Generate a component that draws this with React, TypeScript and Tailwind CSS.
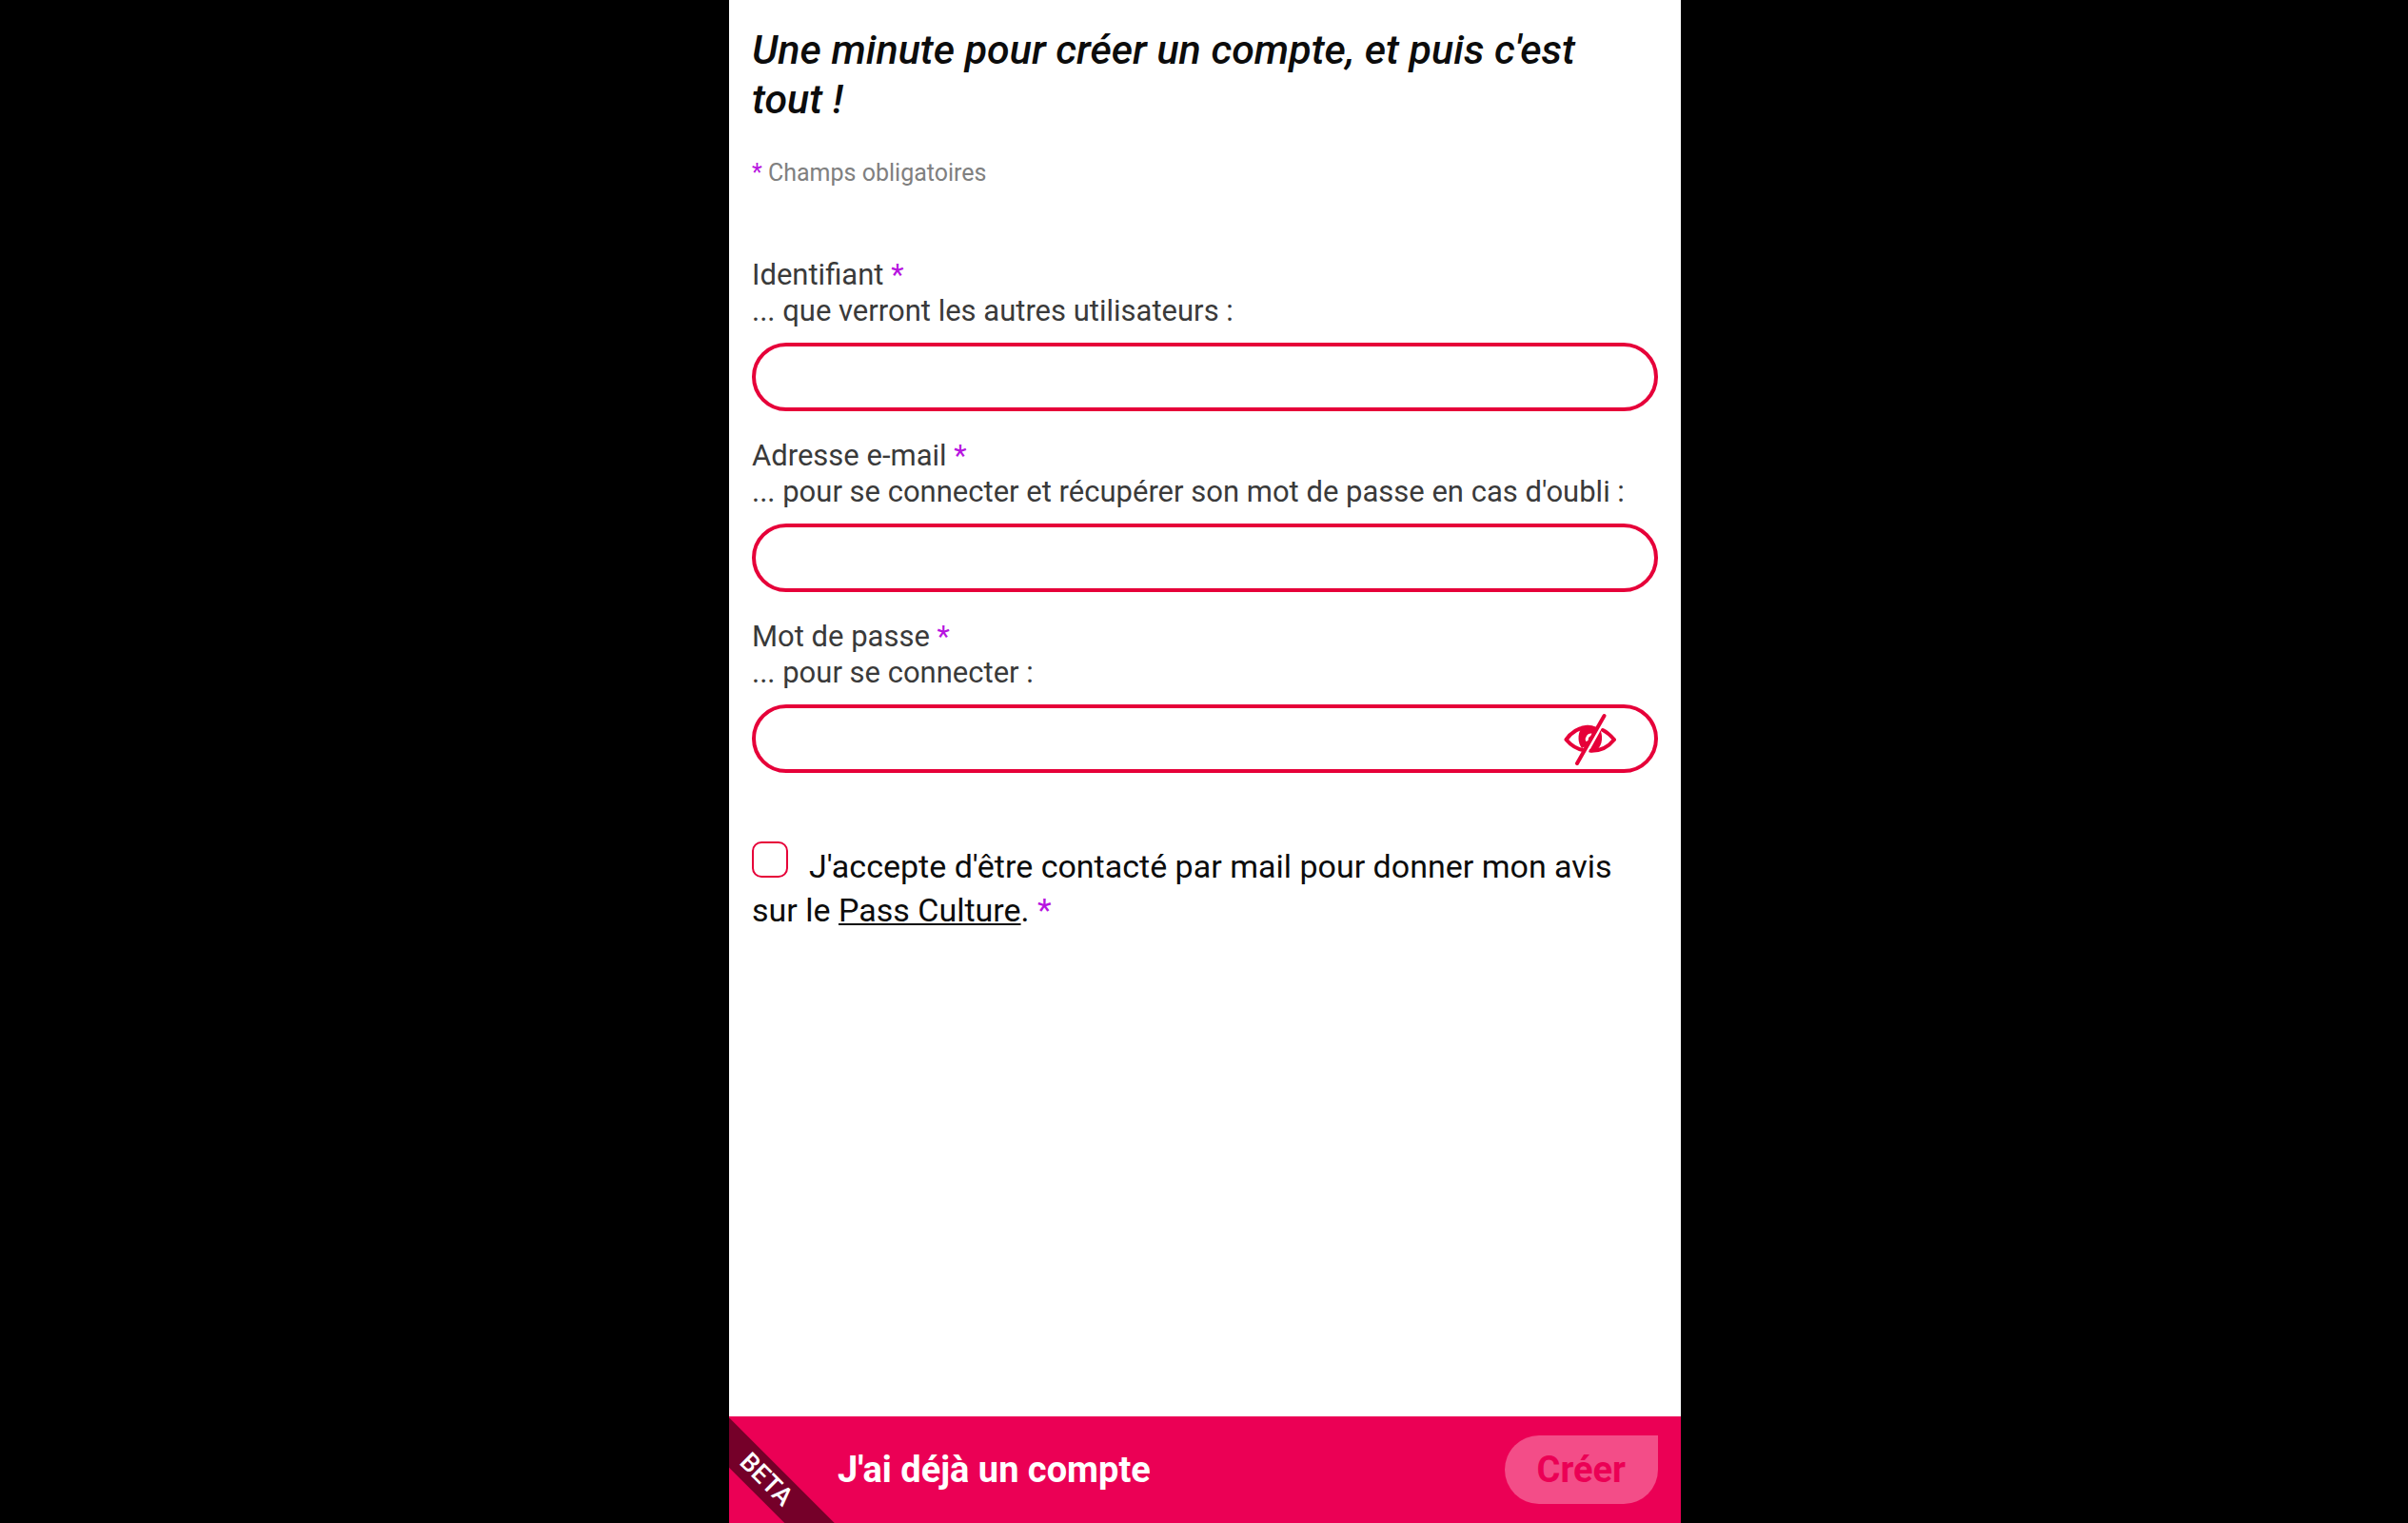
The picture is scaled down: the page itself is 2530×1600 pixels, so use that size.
import { useState, type ReactNode } from "react";

function Required() {
  return <span className="text-[#b715e0]">*</span>;
}

type FieldProps = {
  id: string;
  label: string;
  hint: string;
  type: string;
  children?: ReactNode;
};

function Field({ id, label, hint, type, children }: FieldProps) {
  return (
    <div>
      <label htmlFor={id} className="block pb-3.5 text-[31px] leading-[38px] text-[#3a3a3a]">
        {label} <Required />
        <span className="block">{hint}</span>
      </label>
      <div className="relative">
        <input
          id={id}
          type={type}
          className="block h-18 w-full rounded-full border-4 border-[#e60039] bg-white px-8 text-[31px] outline-none"
        />
        {children}
      </div>
    </div>
  );
}

function EyeSlash() {
  return (
    <svg viewBox="0 0 56 56" className="size-14" fill="none" aria-hidden="true">
      <g stroke="#e60039" strokeWidth="4" strokeLinecap="round" strokeLinejoin="round">
        <path d="M34 17.500C31 16 28 15.500 25.500 15.700C16 16.500 8 22.500 3.500 29C9 35.500 15 39 22 40.200" />
        <path d="M42 19C47 21.500 51 25.500 54 29C48 36.500 39 41 29.500 40.800" />
      </g>
      <path
        d="M19 17.500C15.500 23.500 15.500 32.500 20 38L24.500 36L35 17C30 14.500 24 15 19 17.500Z"
        fill="#e60039"
      />
      <path d="M39.500 19C43 27.500 41 38.500 32 42L27 42.200L38.500 21.500Z" fill="#e60039" />
      <path d="M25.500 30.500C24.500 26.500 27 23.500 30.500 24.200" stroke="white" strokeWidth="3" />
      <path d="M43.500 4L15 54" stroke="#e60039" strokeWidth="4" strokeLinecap="round" />
    </svg>
  );
}

export default function App() {
  const [visible, setVisible] = useState(false);

  return (
    <div className="min-h-screen bg-black pl-0.5 font-['Roboto',sans-serif]">
      <form
        className="mx-auto flex min-h-screen w-full max-w-[1000px] flex-col bg-white"
        onSubmit={(event) => event.preventDefault()}
      >
        <main className="flex-1 px-6 pt-[26px]">
          <h1 className="text-[43px] leading-[52px] font-medium text-[#0c0c0c] italic">
            {"Une minute pour créer un compte, et puis c'est tout\u00a0!"}
          </h1>
          <p className="mt-9 text-[25px] leading-8 text-[#808080]">
            <Required /> Champs obligatoires
          </p>

          <div className="mt-18 flex flex-col gap-7">
            <Field id="identifiant" label="Identifiant" hint="... que verront les autres utilisateurs :" type="text" />
            <Field
              id="email"
              label="Adresse e-mail"
              hint="... pour se connecter et récupérer son mot de passe en cas d'oubli :"
              type="email"
            />
            <Field
              id="password"
              label="Mot de passe"
              hint="... pour se connecter :"
              type={visible ? "text" : "password"}
            >
              <button
                type="button"
                aria-label="Afficher le mot de passe"
                onClick={() => setVisible(!visible)}
                className="absolute inset-y-0 right-11 flex items-center"
              >
                <EyeSlash />
              </button>
            </Field>
          </div>

          <div className="mt-18 text-[34px] leading-[46px] text-[#0c0c0c]">
            <input
              id="contact"
              type="checkbox"
              className="mr-[22px] size-[38px] appearance-none rounded-[10px] border-2 border-[#e60039] bg-white checked:bg-[#e60039]"
            />
            <label htmlFor="contact">
              J'accepte d'être contacté par mail pour donner mon avis sur le{" "}
              <a href="#pass-culture" className="underline decoration-2 underline-offset-2">
                Pass Culture
              </a>
              . <Required />
            </label>
          </div>
        </main>

        <footer className="relative flex items-center justify-between overflow-hidden bg-[#eb0055] py-5 pr-6 pl-[114px]">
          <div className="absolute top-12 -left-[61px] w-[200px] rotate-45 bg-[#750029] text-center text-[27px] leading-[37px] font-medium text-white">
            BETA
          </div>
          <a href="#connexion" className="text-[38px] leading-[46px] font-bold text-white">
            J'ai déjà un compte
          </a>
          <button
            type="submit"
            disabled
            className="h-18 rounded-l-full rounded-br-full bg-[#f34d88] px-[34px] text-[38px] leading-[46px] font-bold text-[#eb0055]"
          >
            Créer
          </button>
        </footer>
      </form>
    </div>
  );
}
